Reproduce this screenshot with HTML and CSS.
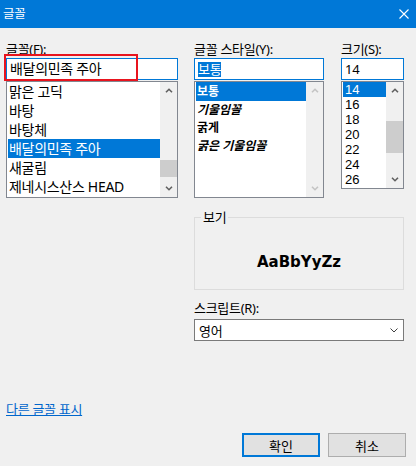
FILE: index.html
```html
<!DOCTYPE html>
<html lang="ko">
<head>
<meta charset="utf-8">
<link rel="stylesheet" href="styles.css">
</head>
<body>
<div class="dialog">
    <div class="titlebar">
        <span class="title">글꼴</span>
        <svg class="close" width="10" height="10" viewBox="0 0 10 10"><path d="M0.5 0.5L9.5 9.5M9.5 0.5L0.5 9.5" stroke="#fff" stroke-width="1.1"/></svg>
    </div>

    <div class="body">
        <div class="field font-field">
            <span class="label">글꼴(F):</span>
            <div class="edit-wrap">
                <div class="edit">배달의민족 주아</div>
                <span class="mark"></span>
            </div>
            <div class="listbox font-list">
                <ul class="items">
                    <li>맑은 고딕</li>
                    <li>바탕</li>
                    <li>바탕체</li>
                    <li class="selected">배달의민족 주아</li>
                    <li>새굴림</li>
                    <li>제네시스산스 HEAD</li>
                </ul>
                <div class="scrollbar">
                    <div class="arrow"><svg width="8" height="5" viewBox="0 0 8 5"><path d="M1 4.3L4 1.3L7 4.3" fill="none" stroke="#606060" stroke-width="1.6"/></svg></div>
                    <div class="track"><div class="thumb font-thumb"></div></div>
                    <div class="arrow"><svg width="8" height="5" viewBox="0 0 8 5"><path d="M1 0.7L4 3.7L7 0.7" fill="none" stroke="#606060" stroke-width="1.6"/></svg></div>
                </div>
            </div>
        </div>

        <div class="right-pane">
            <div class="top-row">
                <div class="field style-field">
                    <span class="label">글꼴 스타일(Y):</span>
                    <div class="edit"><span class="sel-text">보통</span></div>
                    <div class="listbox style-list">
                        <ul class="items">
                            <li class="selected">보통</li>
                            <li class="italic">기울임꼴</li>
                            <li>굵게</li>
                            <li class="italic">굵은 기울임꼴</li>
                        </ul>
                        <div class="scrollbar">
                            <div class="arrow"><svg width="8" height="5" viewBox="0 0 8 5"><path d="M1 4.3L4 1.3L7 4.3" fill="none" stroke="#c4c4c4" stroke-width="1.6"/></svg></div>
                            <div class="track"></div>
                            <div class="arrow"><svg width="8" height="5" viewBox="0 0 8 5"><path d="M1 0.7L4 3.7L7 0.7" fill="none" stroke="#c4c4c4" stroke-width="1.6"/></svg></div>
                        </div>
                    </div>
                </div>
                <div class="field size-field">
                    <span class="label">크기(S):</span>
                    <div class="edit">14</div>
                    <div class="listbox size-list">
                        <ul class="items">
                            <li class="selected">14</li>
                            <li>16</li>
                            <li>18</li>
                            <li>20</li>
                            <li>22</li>
                            <li>24</li>
                            <li>26</li>
                        </ul>
                        <div class="scrollbar">
                            <div class="arrow"><svg width="8" height="5" viewBox="0 0 8 5"><path d="M1 4.3L4 1.3L7 4.3" fill="none" stroke="#606060" stroke-width="1.6"/></svg></div>
                            <div class="track"><div class="thumb size-thumb"></div></div>
                            <div class="arrow"><svg width="8" height="5" viewBox="0 0 8 5"><path d="M1 0.7L4 3.7L7 0.7" fill="none" stroke="#606060" stroke-width="1.6"/></svg></div>
                        </div>
                    </div>
                </div>
            </div>

            <fieldset class="preview">
                <legend>보기</legend>
                <div class="sample">AaBbYyZz</div>
            </fieldset>

            <span class="label script-label">스크립트(R):</span>
            <div class="combo">
                <span>영어</span>
                <svg width="8" height="5" viewBox="0 0 8 5"><path d="M0.5 0.5L4 4L7.5 0.5" fill="none" stroke="#404040" stroke-width="1"/></svg>
            </div>
        </div>
    </div>

    <div class="footer">
        <a class="more-fonts" href="#">다른 글꼴 표시</a>
        <div class="buttons">
            <button class="btn default">확인</button>
            <button class="btn">취소</button>
        </div>
    </div>
</div>
</body>
</html>
```

FILE: styles.css
```css
* {
    box-sizing: border-box;
}
body {
    margin: 0;
    background: #f0f0f0;
    font-family: "Noto Sans", "Noto Sans CJK KR", sans-serif;
    font-size: 13px;
    letter-spacing: -0.3px;
    color: #000;
}

.dialog {
    width: 416px;
    height: 466px;
}
.titlebar {
    height: 28px;
    background: #0078d7;
    color: #fff;
    display: flex;
    align-items: center;
    justify-content: space-between;
    padding: 0 7px 0 3px;
}
.title {
    font-size: 12.5px;
    line-height: 28px;
}
.close {
    display: block;
}

.body {
    display: grid;
    grid-template-columns: 172px 210px;
    column-gap: 16px;
    padding: 13px 0 0 6px;
}
.label {
    display: block;
    line-height: 17px;
}

.edit-wrap {
    position: relative;
}
.edit {
    height: 22px;
    border: 1px solid #0078d7;
    background: #fff;
    padding: 0 3px;
    line-height: 20px;
    white-space: nowrap;
}
.font-field .edit {
    font-size: 14px;
}
.mark {
    position: absolute;
    left: -2px;
    top: -4px;
    width: 134px;
    height: 27px;
    border: 2px solid #e8141e;
}
.sel-text {
    background: #0078d7;
    color: #fff;
    line-height: 15px;
    display: inline-block;
}

.listbox {
    display: flex;
    margin-top: 1px;
    border: 1px solid #828790;
    background: #fff;
    height: 117px;
}
.items {
    list-style: none;
    margin: 0;
    padding: 0 0 0 1px;
    flex: 1;
    overflow: hidden;
}
.items li {
    height: 19px;
    line-height: 19px;
    padding-left: 1px;
    white-space: nowrap;
}
.font-list li {
    font-size: 14px;
}
.items li.selected {
    background: #0078d7;
    color: #fff;
}
.style-list li {
    height: 18px;
    line-height: 18px;
    font-size: 12px;
    font-weight: 700;
    letter-spacing: 0;
}
.style-list li.selected {
    height: 19px;
    line-height: 19px;
}
.style-list li.italic {
    font-style: italic;
}
.size-list {
    height: 108px;
}
.size-list li {
    height: 15px;
    line-height: 15px;
    padding-left: 2px;
    font-family: "Liberation Sans", sans-serif;
    letter-spacing: 0;
}

.scrollbar {
    width: 17px;
    background: #f0f0f0;
    display: flex;
    flex-direction: column;
}
.arrow {
    height: 17px;
    display: flex;
    align-items: center;
    justify-content: center;
}
.arrow svg {
    display: block;
}
.track {
    flex: 1;
}
.thumb {
    background: #cdcdcd;
}
.font-thumb {
    margin-top: 61px;
    height: 17px;
}
.size-thumb {
    margin-top: 22px;
    height: 32px;
}

.top-row {
    display: flex;
    gap: 17px;
}
.style-field {
    width: 130px;
}
.size-field {
    width: 63px;
}

.preview {
    margin: 11px 0 0;
    padding: 0 6px;
    border: 1px solid #dcdcdc;
    min-width: 0;
}
.preview legend {
    padding: 0 2px;
    line-height: 17px;
}
.sample {
    height: 63px;
    padding-top: 26px;
    text-align: center;
    font-family: "DejaVu Sans", sans-serif;
    font-weight: bold;
    font-size: 15px;
    line-height: 20px;
    letter-spacing: 0;
}

.script-label {
    margin-top: 10px;
    margin-bottom: 2px;
}
.combo {
    height: 22px;
    border: 1px solid #7a7a7a;
    background: #fff;
    display: flex;
    align-items: center;
    justify-content: space-between;
    padding: 0 5px 0 4px;
}
.combo svg {
    display: block;
}

.footer {
    padding: 59px 10px 0 6px;
}
.more-fonts {
    display: inline-block;
    line-height: 17px;
    color: #0066cc;
}
.buttons {
    display: flex;
    justify-content: flex-end;
    gap: 8px;
    margin-top: 15px;
}
.btn {
    width: 78px;
    height: 24px;
    padding: 0;
    background: #e1e1e1;
    border: 1px solid #adadad;
    font-family: "Noto Sans", "Noto Sans CJK KR", sans-serif;
    font-size: 13px;
    color: #000;
}
.btn.default {
    border: 2px solid #0078d7;
}
```
